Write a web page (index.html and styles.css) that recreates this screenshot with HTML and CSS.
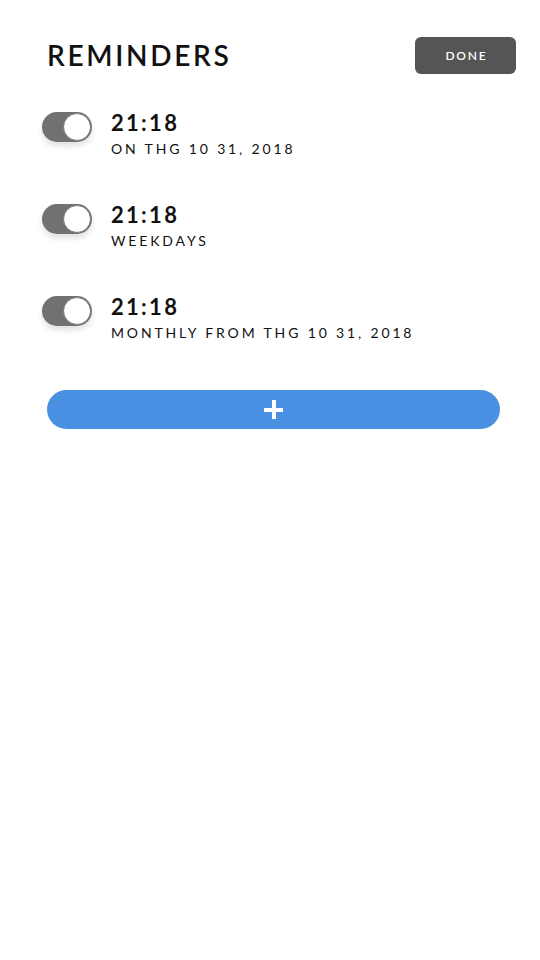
FILE: index.html
```html
<!DOCTYPE html>
<html>
<head>
<meta charset="utf-8">
<link rel="stylesheet" href="styles.css">
</head>
<body>
<div class="page">
  <header class="header">
    <h1 class="title">REMINDERS</h1>
    <button class="done">DONE</button>
  </header>
  <ul class="list">
    <li class="row">
      <span class="toggle"><span class="knob"></span></span>
      <div class="info">
        <div class="time">21:18</div>
        <div class="desc">ON THG 10 31, 2018</div>
      </div>
    </li>
    <li class="row">
      <span class="toggle"><span class="knob"></span></span>
      <div class="info">
        <div class="time">21:18</div>
        <div class="desc">WEEKDAYS</div>
      </div>
    </li>
    <li class="row">
      <span class="toggle"><span class="knob"></span></span>
      <div class="info">
        <div class="time">21:18</div>
        <div class="desc">MONTHLY FROM THG 10 31, 2018</div>
      </div>
    </li>
  </ul>
  <button class="add" aria-label="Add"><span class="plus"></span></button>
</div>
</body>
</html>
```
FILE: styles.css
```css
* { box-sizing: border-box; }
html, body { margin: 0; padding: 0; background: #fff; }
body { font-family: Lato, "Noto Sans", sans-serif; color: #111; width: 540px; height: 960px; }
.page { padding: 37px 24px 0 47px; }
.header { display: flex; justify-content: space-between; align-items: center; }
.title {
  margin: 0;
  font-size: 28px;
  font-weight: 600;
  letter-spacing: 2.7px;
  line-height: 37px;
}
.done {
  width: 101px;
  height: 37px;
  border: none;
  border-radius: 6px;
  background: #555555;
  color: #fff;
  font-family: Lato, "Noto Sans", sans-serif;
  font-size: 12px;
  font-weight: 600;
  letter-spacing: 1.8px;
  padding: 0 0 0 2px;
}
.list { list-style: none; margin: 37px 0 0; padding: 0; display: flex; flex-direction: column; gap: 45px; }
.row { display: flex; align-items: flex-start; gap: 19px; margin-left: -5px; }
.toggle {
  position: relative;
  display: block;
  width: 50px;
  height: 30px;
  margin-top: 1px;
  border-radius: 15px;
  background: #717171;
  box-shadow: 0 4px 6px rgba(0,0,0,0.12);
  flex: none;
}
.knob {
  position: absolute;
  top: 1px;
  right: 1px;
  width: 28px;
  height: 28px;
  border-radius: 50%;
  background: #fff;
  border: 1px solid #7a7a7a;
}
.info { display: flex; flex-direction: column; gap: 5px; }
.time { font-size: 22px; line-height: 24px; font-weight: 700; letter-spacing: 2.3px; color: #111; }
.desc { font-size: 14px; line-height: 18px; font-weight: 400; letter-spacing: 2.85px; color: #111; }
.add {
  display: flex;
  align-items: center;
  justify-content: center;
  width: 453px;
  height: 39px;
  margin-top: 48px;
  border: none;
  border-radius: 20px;
  background: #4a90e2;
  padding: 0;
}
.plus { position: relative; display: block; width: 19px; height: 19px; }
.plus::before, .plus::after { content: ""; position: absolute; background: #fff; }
.plus::before { left: 0; top: 7.5px; width: 19px; height: 4px; }
.plus::after { left: 7.5px; top: 0; width: 4px; height: 19px; }
```
